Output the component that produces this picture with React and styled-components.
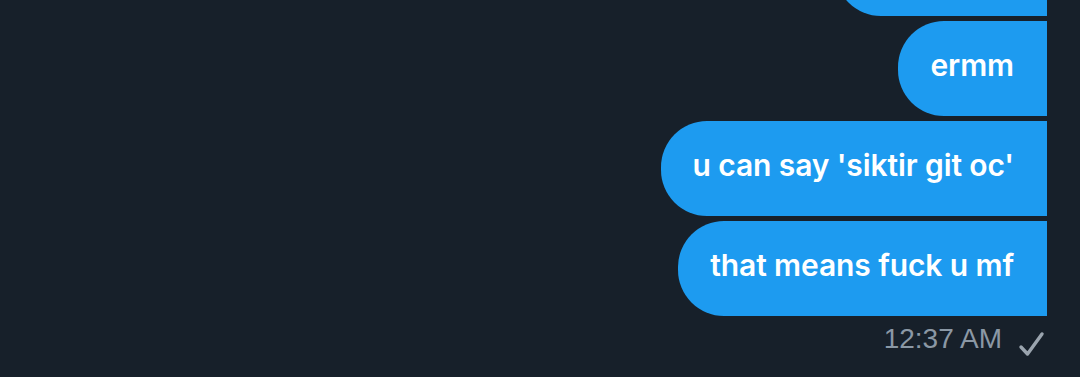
import React from "react";
import styled, { createGlobalStyle } from "styled-components";

const GlobalStyle = createGlobalStyle`
  html, body {
    margin: 0;
    padding: 0;
    background: #17202a;
  }
  body {
    font-family: Inter, "Noto Sans", "Liberation Sans", sans-serif;
  }
`;

const Thread = styled.div`
  height: 377px;
  overflow: hidden;
  display: flex;
  flex-direction: column;
  justify-content: flex-end;
  align-items: flex-end;
  gap: 5px;
  padding: 0 33px 20px 0;
  box-sizing: border-box;
  background: #17202a;
`;

const Bubble = styled.div`
  background: #1d9bf0;
  color: #ffffff;
  font-size: 30px;
  font-weight: 600;
  letter-spacing: -0.1px;
  line-height: 35px;
  padding: 27px 33px 33px 32px;
  border-radius: 46px 0 0 46px;
  white-space: nowrap;
  flex-shrink: 0;
`;

const Meta = styled.div`
  display: flex;
  align-items: flex-start;
  height: 36px;
  gap: 15px;
  color: #8b98a5;
  font-family: "Liberation Sans", Arial, sans-serif;
  font-size: 28px;
  line-height: 36px;
`;

const Tick = styled.svg`
  margin-top: 8px;
  flex-shrink: 0;
`;

const Check = () => (
  <Tick width="30" height="30" viewBox="0 0 30 30" fill="none">
    <path
      d="M4 18 L10.5 25 L25 5"
      stroke="#9aa4ae"
      strokeWidth="3.4"
      strokeLinecap="round"
      strokeLinejoin="round"
    />
  </Tick>
);

const messages = [
  "okay lmao",
  "ermm",
  "u can say 'siktir git oc'",
  "that means fuck u mf",
];

export default function App() {
  return (
    <>
      <GlobalStyle />
      <Thread>
        {messages.map((m, i) => (
          <Bubble key={i}>{m}</Bubble>
        ))}
        <Meta>
          <span>12:37 AM</span>
          <Check />
        </Meta>
      </Thread>
    </>
  );
}
